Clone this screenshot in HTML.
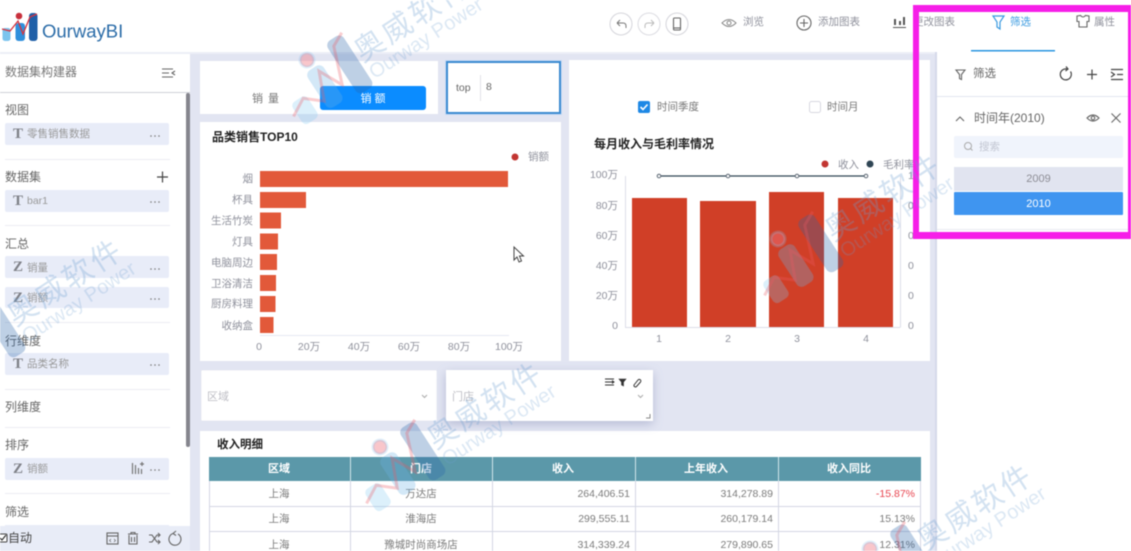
<!DOCTYPE html>
<html lang="zh"><head><meta charset="utf-8"><title>OurwayBI</title>
<style>
html,body{margin:0;padding:0;width:1131px;height:551px;overflow:hidden;background:#fff}
svg{display:block;filter:blur(.5px)}
text{font-family:"Liberation Sans","Noto Sans CJK SC",sans-serif;dominant-baseline:central;font-size:11px}
.g{fill:#7d7d85}.l{fill:#666;font-size:12px}.p{fill:#999;font-size:10.5px}
.a{fill:#8f919c;font-size:10.5px}.e{text-anchor:end}.m{text-anchor:middle}
.b{font-weight:bold;fill:#222;font-size:12px}
.c{fill:#7c7c7c;font-size:10.5px}
.h{fill:#fff;font-weight:bold;font-size:11px;text-anchor:middle}
.s{fill:none;stroke:#666;stroke-width:1.1}
.d{fill:#777;font-size:11px;letter-spacing:1px}
.w1{font-size:30px;letter-spacing:3px;fill:rgba(110,160,210,.3)}
.w2{font-size:20px;fill:rgba(110,160,210,.24)}
</style></head><body>
<svg width="1131" height="551" viewBox="0 0 1131 551" xmlns="http://www.w3.org/2000/svg">
<defs>
<filter id="sh" x="-20%" y="-40%" width="140%" height="200%"><feDropShadow dx="0" dy="3" stdDeviation="5" flood-color="#8088b0" flood-opacity=".45"/></filter>
<g id="wl">
<rect x="-38" y="28" width="18" height="26" rx="5" fill="rgba(130,200,240,.28)"/>
<rect x="-9" y="10" width="19" height="44" rx="6" fill="rgba(110,180,230,.3)"/>
<rect x="24" y="-4" width="19" height="62" rx="6" fill="rgba(40,100,170,.3)"/>
<circle cx="0" cy="0" r="7" fill="rgba(240,120,130,.42)" stroke="rgba(130,190,235,.25)" stroke-width="3"/>
<polyline points="-42,40 -24,30 -8,44 4,16 16,40 30,3 44,-4" fill="none" stroke="rgba(235,90,100,.3)" stroke-width="3"/>
</g>
</defs>

<!-- page -->
<rect width="1131" height="551" fill="#fff"/>
<rect x="190" y="52" width="747" height="499" fill="#e2e5f2"/>
<rect x="0" y="52" width="1131" height="2" fill="#eceef6"/>
<rect x="935" y="52" width="2" height="499" fill="#d5d9ea"/>

<!-- header -->
<rect x="2.500" y="28" width="8" height="13" rx="2.500" fill="#7cc4ee"/>
<rect x="15.500" y="23" width="9.500" height="18" rx="3" fill="#2f8fdc"/>
<rect x="29" y="13" width="8.500" height="28" rx="3" fill="#1f5fa8"/>
<circle cx="19" cy="16" r="3.300" fill="#c8303c"/>
<polyline points="2,29 10,31 18,21 23,34 30,17 37,14" fill="none" stroke="#d8323c" stroke-width="1.300"/>
<text x="42" y="31" style="font-size:18.5px;fill:#2b6ca8">OurwayBI</text>

<circle cx="621" cy="24" r="11" fill="none" stroke="#d5d5db"/><path d="M617 23l3-3M617 23l3 3M617 23h6q3 0 3 3v2" fill="none" stroke="#777"/>
<circle cx="649" cy="24" r="11" fill="none" stroke="#dcdce2"/><path d="M654 23l-3-3M654 23l-3 3M654 23h-6q-3 0-3 3v2" fill="none" stroke="#bbb"/>
<circle cx="677" cy="24" r="11" fill="none" stroke="#d5d5db"/><rect x="673.500" y="18" width="7" height="12" rx="1" class="s"/><path d="M673.500 28h7" class="s" stroke-width="1.500"/>
<path d="M722 23q7-7 14 0q-7 7-14 0z" fill="none" stroke="#888"/><circle cx="729" cy="23" r="2" fill="none" stroke="#888"/>
<text x="743" y="22" class="a">浏览</text>
<circle cx="804" cy="23" r="7" class="s"/><path d="M800 23h8M804 19v8" class="s"/>
<text x="818" y="22" class="a">添加图表</text>
<path d="M895 25v-6M900 25v-4M904 25v-8" fill="none" stroke="#555" stroke-width="2"/><path d="M893 27.500h13" stroke="#555" fill="none"/>
<text x="913" y="22" class="a">更改图表</text>
<path d="M993 16h11l-4 6v7l-3-2v-5z" fill="none" stroke="#3a9ae0" stroke-width="1.200"/>
<text x="1010" y="22" style="fill:#3a9ae0;font-size:10.5px">筛选</text>
<rect x="971" y="50" width="84" height="1.500" fill="#2a96e0"/>
<path d="M1077 16l3.500-.5q2.500 3 5 0l3.500.5v5.500h-2v5.500h-8v-5.500h-2z" class="s"/>
<text x="1094" y="22" class="a">属性</text>

<!-- left panel -->
<rect x="0" y="54" width="190" height="497" fill="#fff"/>
<rect x="0" y="92" width="190" height="1" fill="#cfd1d8"/>
<text x="5" y="72" class="l" style="fill:#777">数据集构建器</text>
<path d="M162 69h11M162 73h7M162 77h11M175 71l-3 2 3 2" class="s"/>
<rect x="186" y="93" width="4" height="354" rx="2" fill="#85858d"/>

<g fill="#ecedf3">
<rect x="5" y="159" width="165" height="1"/><rect x="5" y="225" width="165" height="1"/><rect x="5" y="322" width="165" height="1"/><rect x="5" y="389" width="165" height="1"/><rect x="5" y="427" width="165" height="1"/><rect x="5" y="493" width="165" height="1"/>
</g>
<g fill="#e8ecf8">
<rect x="5" y="123" width="164" height="22" rx="2"/><rect x="5" y="190" width="164" height="22" rx="2"/><rect x="5" y="256" width="164" height="22" rx="2"/><rect x="5" y="287" width="164" height="21" rx="2"/><rect x="5" y="353" width="164" height="22" rx="2"/><rect x="5" y="458" width="164" height="22" rx="2"/><rect x="5" y="525" width="164" height="10"/>
</g>
<text x="5" y="110" class="l">视图</text>
<text x="5" y="177" class="l">数据集</text>
<text x="5" y="244" class="l">汇总</text>
<text x="5" y="341" class="l">行维度</text>
<text x="5" y="407" class="l">列维度</text>
<text x="5" y="445" class="l">排序</text>
<text x="5" y="512" class="l">筛选</text>
<path d="M157 177h11M162.500 171.500v11" stroke="#444" stroke-width="1.200" fill="none"/>

<text x="13" y="134" style="font-family:'Liberation Serif',serif;font-weight:bold;font-size:15px;fill:#7f8188">T</text>
<text x="13" y="201" style="font-family:'Liberation Serif',serif;font-weight:bold;font-size:15px;fill:#7f8188">T</text>
<text x="13" y="267" style="font-family:'Liberation Serif',serif;font-weight:bold;font-size:15px;fill:#7f8188">Z</text>
<text x="13" y="298" style="font-family:'Liberation Serif',serif;font-weight:bold;font-size:15px;fill:#7f8188">Z</text>
<text x="13" y="364" style="font-family:'Liberation Serif',serif;font-weight:bold;font-size:15px;fill:#7f8188">T</text>
<text x="13" y="469" style="font-family:'Liberation Serif',serif;font-weight:bold;font-size:15px;fill:#7f8188">Z</text>
<text x="27" y="134" class="p">零售销售数据</text>
<text x="27" y="201" class="p">bar1</text>
<text x="27" y="268" class="p">销量</text>
<text x="27" y="298" class="p">销额</text>
<text x="27" y="364" class="p">品类名称</text>
<text x="27" y="469" class="p">销额</text>
<g fill="#777">
<circle cx="151" cy="136" r=".8"/><circle cx="155" cy="136" r=".8"/><circle cx="159" cy="136" r=".8"/>
<circle cx="151" cy="202" r=".8"/><circle cx="155" cy="202" r=".8"/><circle cx="159" cy="202" r=".8"/>
<circle cx="151" cy="269" r=".8"/><circle cx="155" cy="269" r=".8"/><circle cx="159" cy="269" r=".8"/>
<circle cx="151" cy="299" r=".8"/><circle cx="155" cy="299" r=".8"/><circle cx="159" cy="299" r=".8"/>
<circle cx="151" cy="365" r=".8"/><circle cx="155" cy="365" r=".8"/><circle cx="159" cy="365" r=".8"/>
<circle cx="151" cy="470" r=".8"/><circle cx="155" cy="470" r=".8"/><circle cx="159" cy="470" r=".8"/>
</g>
<path d="M132.500 474v-11M135.500 474v-9M138.500 474v-6M141.500 474v-5M140 464h4M142 462v4" fill="none" stroke="#777" stroke-width="1.200"/>

<rect x="0" y="526" width="190" height="25" fill="#e8ecf7"/>
<rect x="-1" y="534" width="8" height="8" rx="1" fill="#fff" stroke="#444"/><path d="M0 538l2 2 4-5" fill="none" stroke="#333" stroke-width="1.200"/>
<text x="8" y="538" style="fill:#444;font-size:12px">自动</text>
<rect x="107" y="533" width="11" height="11" class="s"/><path d="M107 536h11" class="s"/><path d="M111 539l-1.500 1.500 1.500 1.500M114 539l1.500 1.500-1.500 1.500" fill="none" stroke="#666" stroke-width=".7"/>
<path d="M128 534h10M131 534v-1.500h4v1.500M129 535v9h8v-9M131.500 537v5M134.500 537v5" class="s"/>
<path d="M149 535h3l5 7h3M149 542h3l5-7h3M158 533l2 2-2 2M158 540l2 2-2 2" class="s"/>
<path d="M178 534a6 6 0 1 1-5-.5M176 531l-3 2.500 3 2" class="s"/>

<!-- switch card -->
<rect x="200" y="61" width="238" height="53" fill="#fff"/>
<text x="252" y="99" class="d">销 量</text>
<rect x="320" y="86" width="106" height="24" rx="3" fill="#0b8cff"/>
<text x="373" y="99" class="m" style="fill:#fff;font-size:11px">销 额</text>

<!-- top box -->
<rect x="445" y="60" width="117" height="55" fill="#c9dcf6"/>
<rect x="447" y="62" width="113" height="51" fill="#fff" stroke="#3a8ad0" stroke-width="2"/>
<text x="456" y="88" style="fill:#666;font-size:10.5px">top</text>
<rect x="480" y="75" width="1" height="26" fill="#e2e2e8"/>
<text x="486" y="87" style="fill:#666;font-size:10.5px">8</text>

<!-- left chart -->
<rect x="200" y="122" width="361" height="239" fill="#fff"/>
<text x="212" y="137" class="b">品类销售TOP10</text>
<circle cx="515" cy="157" r="3.500" fill="#c23531"/>
<text x="528" y="157" class="a">销额</text>
<g fill="#e2593a">
<rect x="260" y="171" width="248" height="16"/>
<rect x="260" y="192" width="46" height="16"/>
<rect x="260" y="212.500" width="21" height="16"/>
<rect x="260" y="233.500" width="18" height="16"/>
<rect x="260" y="254" width="17" height="16"/>
<rect x="260" y="275" width="16" height="16"/>
<rect x="260" y="296" width="15.500" height="16"/>
<rect x="260" y="317" width="13.500" height="16"/>
</g>
<rect x="260" y="335" width="249" height="1" fill="#e6e8f3"/>
<text x="253" y="179" class="a e">烟</text>
<text x="253" y="200" class="a e">杯具</text>
<text x="253" y="221" class="a e">生活竹炭</text>
<text x="253" y="242" class="a e">灯具</text>
<text x="253" y="263" class="a e">电脑周边</text>
<text x="253" y="284" class="a e">卫浴清洁</text>
<text x="253" y="304" class="a e">厨房料理</text>
<text x="253" y="326" class="a e">收纳盒</text>
<text x="259" y="347" class="a m">0</text>
<text x="309" y="347" class="a m">20万</text>
<text x="359" y="347" class="a m">40万</text>
<text x="409" y="347" class="a m">60万</text>
<text x="459" y="347" class="a m">80万</text>
<text x="509" y="347" class="a m">100万</text>
<path d="M514 247v13l3-3 2 5 2.500-1-2-5h4z" fill="#fff" stroke="#444" stroke-width="1"/>

<!-- right chart -->
<rect x="569" y="60" width="361" height="301" fill="#fff"/>
<rect x="638" y="101" width="12" height="12" rx="2" fill="#1e88e5"/>
<path d="M640.500 107l2.500 2.500 4.500-5" fill="none" stroke="#fff" stroke-width="1.600"/>
<text x="657" y="107" class="a" style="fill:#777">时间季度</text>
<rect x="809.500" y="101.500" width="11" height="11" rx="2" fill="#fff" stroke="#d8d8e0"/>
<text x="827" y="107" class="a" style="fill:#777">时间月</text>
<text x="594" y="144" class="b">每月收入与毛利率情况</text>
<circle cx="825" cy="164" r="3.500" fill="#c23531"/>
<text x="838" y="165" class="a">收入</text>
<circle cx="870" cy="164" r="3.500" fill="#2f4554"/>
<text x="883" y="165" class="a">毛利率</text>
<path d="M625.500 176v151.500H900M900.500 176v151.500" fill="none" stroke="#dcdee9"/>
<g fill="#d03f27">
<rect x="632" y="198" width="55" height="129"/>
<rect x="700" y="201" width="56" height="126"/>
<rect x="769" y="192" width="55" height="135"/>
<rect x="838" y="198" width="55" height="129"/>
</g>
<path d="M659 176h207" stroke="#2f4554" stroke-width="1.300" fill="none"/>
<g fill="#fff" stroke="#5a6672"><circle cx="659" cy="176" r="1.800"/><circle cx="728" cy="176" r="1.800"/><circle cx="797" cy="176" r="1.800"/><circle cx="866" cy="176" r="1.800"/></g>
<text x="618" y="175" class="a e">100万</text>
<text x="618" y="206" class="a e">80万</text>
<text x="618" y="236" class="a e">60万</text>
<text x="618" y="266" class="a e">40万</text>
<text x="618" y="296" class="a e">20万</text>
<text x="618" y="326" class="a e">0</text>
<text x="908" y="176" class="a">1</text>
<text x="908" y="206" class="a">0</text>
<text x="908" y="236" class="a">0</text>
<text x="908" y="266" class="a">0</text>
<text x="908" y="296" class="a">0</text>
<text x="908" y="326" class="a">0</text>
<text x="659" y="339" class="a m">1</text>
<text x="728" y="339" class="a m">2</text>
<text x="797" y="339" class="a m">3</text>
<text x="866" y="339" class="a m">4</text>

<!-- selects -->
<rect x="201" y="370" width="236" height="51" rx="1" fill="#fff" stroke="#dcdfec" stroke-width=".5"/>
<text x="207" y="397" style="fill:#bdbdc4">区域</text>
<path d="M422 395l2.500 2.500 2.500-2.500" fill="none" stroke="#aaa"/>

<!-- table card -->
<rect x="200" y="431" width="730" height="120" fill="#fff"/>
<text x="217" y="445" class="b" style="font-size:11.5px">收入明细</text>
<rect x="209" y="457" width="712" height="24" fill="#5b98a9"/>
<g fill="#d4d6e4">
<rect x="209" y="481" width="1" height="70"/><rect x="350" y="481" width="1" height="70"/><rect x="492" y="481" width="1" height="70"/><rect x="635" y="481" width="1" height="70"/><rect x="778" y="481" width="1" height="70"/><rect x="920" y="481" width="1" height="70"/>
<rect x="209" y="506" width="712" height="1"/><rect x="209" y="531" width="712" height="1"/>
</g>
<g fill="#cfe6ea"><rect x="350" y="457" width="1" height="24"/><rect x="492" y="457" width="1" height="24"/><rect x="635" y="457" width="1" height="24"/><rect x="778" y="457" width="1" height="24"/></g>
<text x="279" y="469" class="h">区域</text>
<text x="421" y="469" class="h">门店</text>
<text x="563" y="469" class="h">收入</text>
<text x="706" y="469" class="h">上年收入</text>
<text x="849" y="469" class="h">收入同比</text>
<text x="279" y="494" class="c m">上海</text><text x="421" y="494" class="c m">万达店</text><text x="630" y="494" class="c e">264,406.51</text><text x="773" y="494" class="c e">314,278.89</text><text x="915" y="494" class="c e" style="fill:#e8444f">-15.87%</text>
<text x="279" y="519" class="c m">上海</text><text x="421" y="519" class="c m">淮海店</text><text x="630" y="519" class="c e">299,555.11</text><text x="773" y="519" class="c e">260,179.14</text><text x="915" y="519" class="c e">15.13%</text>
<text x="279" y="545" class="c m">上海</text><text x="421" y="545" class="c m">豫城时尚商场店</text><text x="630" y="545" class="c e">314,339.24</text><text x="773" y="545" class="c e">279,890.65</text><text x="915" y="545" class="c e">12.31%</text>

<rect x="446" y="370" width="207" height="51" fill="#fff" filter="url(#sh)"/>
<text x="452" y="397" style="fill:#bdbdc4">门店</text>
<path d="M638 395l2.500 2.500 2.500-2.500" fill="none" stroke="#aaa"/>
<path d="M605 379h9M605 382h9M605 385h9M612 380.500l2 1.500-2 1.500" fill="none" stroke="#333"/>
<path d="M619 379h7l-2.500 3v4l-2-1v-3z" fill="#333" stroke="#333" stroke-width=".6"/>
<path d="M634 385l4-5a1.500 1.500 0 0 1 2.500 2l-4 4.500a1.500 1.500 0 0 1-2.500-1.500z" fill="none" stroke="#333"/>
<path d="M650 414v4h-4" fill="none" stroke="#888"/>

<!-- right panel -->
<rect x="937" y="52" width="194" height="499" fill="#fff"/>
<rect x="937" y="96" width="194" height="1" fill="#e2e5ef"/>
<rect x="937" y="229" width="194" height="1" fill="#e8eaf2"/>
<path d="M956 70h9l-3.500 4.500v5l-2-1v-4z" class="s"/>
<text x="973" y="74" class="l" style="font-size:11.5px">筛选</text>
<path d="M1070.500 71.500a5.500 5.500 0 1 1-3.500-2.500M1066 66.500l2 2.500-2.500 2" fill="none" stroke="#444" stroke-width="1.200"/>
<path d="M1087 74.500h10M1092 69.500v10" fill="none" stroke="#444" stroke-width="1.200"/>
<path d="M1111 69.500h12M1117 74.500h6M1111 79.500h12M1111 72l3.500 2.500-3.500 2.500" fill="none" stroke="#444" stroke-width="1.200"/>
<path d="M956 121l4-4 4 4" class="s"/>
<text x="974" y="118" class="l">时间年(2010)</text>
<path d="M1087 118q6-6 12 0q-6 6-12 0z" class="s"/><circle cx="1093" cy="118" r="1.800" class="s"/>
<path d="M1111.500 113.500l9 9M1120.500 113.500l-9 9" class="s"/>
<rect x="954" y="136" width="169" height="22" rx="2" fill="#f0f4fc"/>
<circle cx="968" cy="146" r="3.500" fill="none" stroke="#aaa"/><path d="M970.500 148.500l2 2" stroke="#aaa" fill="none"/>
<text x="979" y="147" style="fill:#c2c6d2;font-size:10.5px">搜索</text>
<rect x="954" y="167" width="169" height="24" fill="#e1e4f0"/>
<text x="1038.500" y="179" class="m" style="fill:#8d8d95">2009</text>
<rect x="954" y="192" width="169" height="23" rx="1" fill="#3f95f0"/>
<text x="1038.500" y="204" class="m" style="fill:#fff">2010</text>

<!-- magenta highlight -->
<path d="M913 5H1131V239H913zM919 12V232H1128V12z" fill="#f61ee8" fill-rule="evenodd"/>

<!-- watermarks -->
<g transform="translate(307 60) rotate(-33)"><use href="#wl"/><text x="45" y="23" class="w1">奥威软件</text><text x="46" y="47" class="w2">Ourway Power</text></g>
<g transform="translate(380 447) rotate(-33)"><use href="#wl"/><text x="45" y="23" class="w1">奥威软件</text><text x="46" y="47" class="w2">Ourway Power</text></g>
<g transform="translate(778 239) rotate(-33)"><use href="#wl"/><text x="45" y="23" class="w1">奥威软件</text><text x="46" y="47" class="w2">Ourway Power</text></g>
<g transform="translate(-40 324) rotate(-33)"><use href="#wl"/><text x="45" y="23" class="w1">奥威软件</text><text x="46" y="47" class="w2">Ourway Power</text></g>
<g transform="translate(870 549) rotate(-33)"><use href="#wl"/><text x="45" y="23" class="w1">奥威软件</text><text x="46" y="47" class="w2">Ourway Power</text></g>
</svg>
</body></html>
